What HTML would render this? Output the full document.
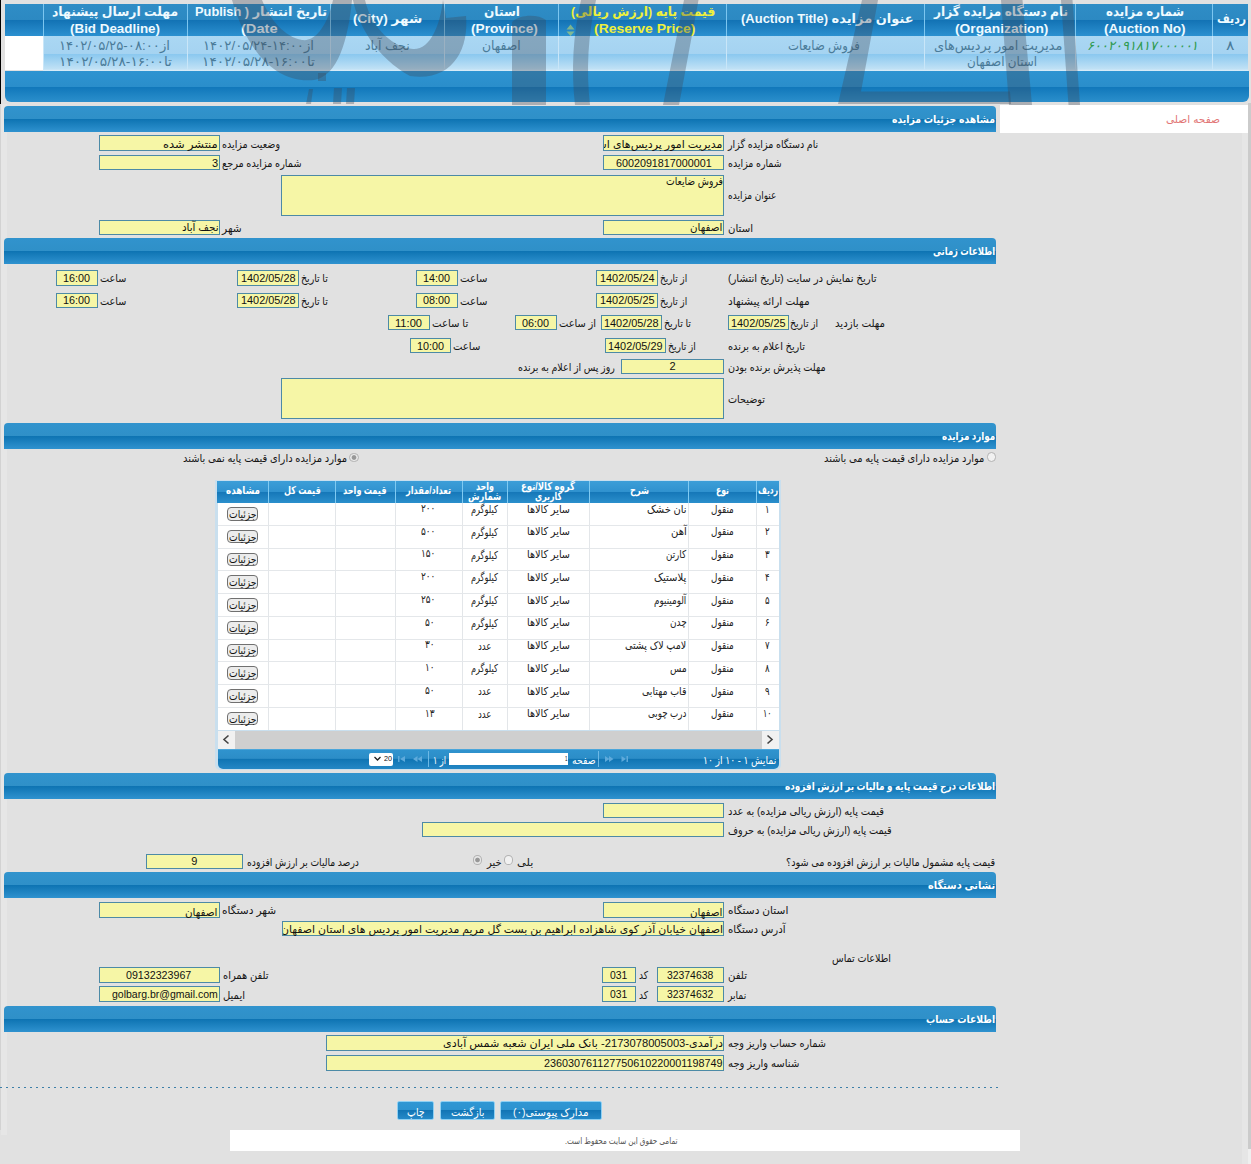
<!DOCTYPE html><html lang="fa"><head><meta charset="utf-8"><title>مشاهده جزئیات مزایده</title><style>
html,body{margin:0;padding:0}
body{background:#e1e1e1}
#pg{position:relative;width:1251px;height:1164px;overflow:hidden;background:#e1e1e1;font-family:"Liberation Sans","DejaVu Sans",sans-serif;font-size:11px;color:#111;direction:rtl}
#pg div{position:absolute;box-sizing:border-box}
.t{position:absolute;white-space:nowrap;transform-origin:0 0;line-height:14px;direction:rtl}
.sh{background:linear-gradient(to bottom,#3193cd 0,#2f90c8 50%,#0d73b2 50%,#2f92cf 100%);border-radius:4px 4px 0 0}
.ht{color:#fff;font-weight:bold;font-size:11px}
.in{background:#f6f6a6;border:1px solid #4c8aa6}
.l{color:#151515}
.iv{color:#111}
.th{color:#eefaff;font-weight:bold;font-size:13px;line-height:16px}
.ty{color:#eef03c}
.td{color:#4a7b99;font-size:13px;line-height:16px}
.gr{color:#2f9a4f;font-style:italic}
.g{color:#222;font-size:11px}
.gh{color:#fff;font-weight:bold;font-size:11px;line-height:12px}
.gb{color:#111;font-size:11px;line-height:12px}
.sm{color:#555;font-size:9px;line-height:12px}
.bt{color:#fff;font-size:11px}
.pg{color:#fff;font-size:11px}
.pk{color:#e27676}
.rd{border:1px solid #b2b2b2;border-radius:50%;background:#f1f1f1}
.rs{background:radial-gradient(circle,#959595 0,#9a9a9a 36%,#e6e6e6 52%,#eee 100%)}
.gbtn{background:#ececec;border:1px solid #707070;border-radius:4px}
.btn{border:1px solid #8fd0f3;border-radius:2px;background:linear-gradient(to bottom,#3097d4 0,#2c92cf 50%,#1275b5 50%,#2589c8 100%)}
.sel{color:#111;font-size:8px}

</style></head><body><div id="pg">
<div class="" style="left:1248px;top:103px;width:3px;height:1046px;background:#cbcbcb"></div>
<div class="" style="left:1248px;top:1149px;width:3px;height:15px;background:#efefef"></div>
<div class="" style="left:1242px;top:133px;width:6px;height:1031px;background:#e6e6e6"></div>
<div class="" style="left:0px;top:104px;width:1px;height:1026px;background:#d2d2d2"></div>
<div class="" style="left:1px;top:104px;width:5.5px;height:1031px;background:#e6e6e6"></div>
<div class="" style="left:0px;top:0px;width:1px;height:104px;background:#000"></div>
<div class="" style="left:5px;top:4px;width:1243px;height:32px;background:linear-gradient(to bottom,#2f8dc6 0,#2c89c2 50%,#1272b4 50%,#2b90d0 100%)"></div>
<div class="" style="left:42.5px;top:4px;width:1.0px;height:32px;background:#7cc6f0"></div>
<div class="" style="left:186.5px;top:4px;width:1.0px;height:32px;background:#7cc6f0"></div>
<div class="" style="left:329.5px;top:4px;width:1.0px;height:32px;background:#7cc6f0"></div>
<div class="" style="left:443.5px;top:4px;width:1.0px;height:32px;background:#7cc6f0"></div>
<div class="" style="left:557.5px;top:4px;width:1.0px;height:32px;background:#7cc6f0"></div>
<div class="" style="left:725.5px;top:4px;width:1.0px;height:32px;background:#7cc6f0"></div>
<div class="" style="left:924.0px;top:4px;width:1.0px;height:32px;background:#7cc6f0"></div>
<div class="" style="left:1074.5px;top:4px;width:1.0px;height:32px;background:#7cc6f0"></div>
<div class="" style="left:1211.5px;top:4px;width:1.0px;height:32px;background:#7cc6f0"></div>
<div class="" style="left:5px;top:36px;width:38px;height:34px;background:#fff"></div>
<div class="" style="left:43px;top:36px;width:1205px;height:35px;background:linear-gradient(to bottom,#aad7f3 0,#a5d3f1 52%,#8ac8ef 52%,#c0e1f5 94%,#dcedf8 100%)"></div>
<div class="" style="left:42.5px;top:36px;width:1.0px;height:34px;background:#c9e6f8"></div>
<div class="" style="left:186.5px;top:36px;width:1.0px;height:34px;background:#c9e6f8"></div>
<div class="" style="left:329.5px;top:36px;width:1.0px;height:34px;background:#c9e6f8"></div>
<div class="" style="left:443.5px;top:36px;width:1.0px;height:34px;background:#c9e6f8"></div>
<div class="" style="left:557.5px;top:36px;width:1.0px;height:34px;background:#c9e6f8"></div>
<div class="" style="left:725.5px;top:36px;width:1.0px;height:34px;background:#c9e6f8"></div>
<div class="" style="left:924.0px;top:36px;width:1.0px;height:34px;background:#c9e6f8"></div>
<div class="" style="left:1074.5px;top:36px;width:1.0px;height:34px;background:#c9e6f8"></div>
<div class="" style="left:1211.5px;top:36px;width:1.0px;height:34px;background:#c9e6f8"></div>
<div class="" style="left:5px;top:71px;width:1244px;height:31px;background:linear-gradient(to bottom,#2d93d1 0,#2a8ecb 51%,#1077ba 51%,#2b8fcc 100%);border-radius:0 0 6px 6px"></div>
<div class="" style="left:1000px;top:105px;width:248px;height:28px;background:#fff"></div>
<div class="sh" style="left:4px;top:106px;width:992px;height:26px;"></div>
<div class="in" style="left:603px;top:135px;width:121px;height:16px;"></div>
<div class="in" style="left:603px;top:155px;width:121px;height:15px;"></div>
<div class="in" style="left:281.3px;top:174.7px;width:442.7px;height:41.8px;"></div>
<div class="in" style="left:603px;top:220.2px;width:121px;height:15.0px;"></div>
<div class="in" style="left:99px;top:135px;width:120.5px;height:16px;"></div>
<div class="in" style="left:99px;top:155px;width:120.5px;height:15px;"></div>
<div class="in" style="left:99px;top:220.2px;width:120.5px;height:15.0px;"></div>
<div class="sh" style="left:4px;top:238px;width:992px;height:26px;"></div>
<div class="in" style="left:596px;top:269.5px;width:61.5px;height:16.0px;"></div>
<div class="in" style="left:415.5px;top:269.5px;width:42.0px;height:16.0px;"></div>
<div class="in" style="left:237px;top:269.5px;width:61.7px;height:16.0px;"></div>
<div class="in" style="left:55.5px;top:269.5px;width:42.0px;height:16.0px;"></div>
<div class="in" style="left:596px;top:292.5px;width:61.5px;height:15.2px;"></div>
<div class="in" style="left:415.5px;top:292.5px;width:42.0px;height:15.2px;"></div>
<div class="in" style="left:237px;top:292.5px;width:61.7px;height:15.2px;"></div>
<div class="in" style="left:55.5px;top:292.5px;width:42.0px;height:15.2px;"></div>
<div class="in" style="left:728px;top:314.7px;width:61px;height:15.6px;"></div>
<div class="in" style="left:600.5px;top:314.7px;width:61.5px;height:15.6px;"></div>
<div class="in" style="left:514.5px;top:314.7px;width:42.0px;height:15.6px;"></div>
<div class="in" style="left:388px;top:314.7px;width:41.5px;height:15.6px;"></div>
<div class="in" style="left:604.5px;top:337.5px;width:61.0px;height:15.5px;"></div>
<div class="in" style="left:409.6px;top:337.5px;width:41.4px;height:15.5px;"></div>
<div class="in" style="left:621px;top:358.5px;width:103px;height:15.0px;"></div>
<div class="in" style="left:281.3px;top:377.5px;width:442.7px;height:41.5px;"></div>
<div class="sh" style="left:4px;top:423px;width:992px;height:26px;"></div>
<div class="rd" style="left:986.5px;top:452.3px;width:9.3px;height:9.3px;"></div>
<div class="rd rs" style="left:349.3px;top:452.5px;width:9.3px;height:9.3px;"></div>
<div class="" style="left:215.2px;top:480px;width:565.8px;height:290px;background:#c9dfee;border-radius:0 0 5px 5px"></div>
<div class="" style="left:217px;top:480.5px;width:562.3px;height:22.0px;background:linear-gradient(to bottom,#3c9ed8 0,#3092cf 48%,#1577b8 50%,#2b8fcc 100%)"></div>
<div class="" style="left:268.0px;top:480.5px;width:1.0px;height:22.0px;background:#7fcaf2"></div>
<div class="" style="left:334.5px;top:480.5px;width:1.0px;height:22.0px;background:#7fcaf2"></div>
<div class="" style="left:394.5px;top:480.5px;width:1.0px;height:22.0px;background:#7fcaf2"></div>
<div class="" style="left:461.8px;top:480.5px;width:1.0px;height:22.0px;background:#7fcaf2"></div>
<div class="" style="left:506.5px;top:480.5px;width:1.0px;height:22.0px;background:#7fcaf2"></div>
<div class="" style="left:589.0px;top:480.5px;width:1.0px;height:22.0px;background:#7fcaf2"></div>
<div class="" style="left:688.1px;top:480.5px;width:1.0px;height:22.0px;background:#7fcaf2"></div>
<div class="" style="left:755.7px;top:480.5px;width:1.0px;height:22.0px;background:#7fcaf2"></div>
<div class="" style="left:218px;top:502.5px;width:561.3px;height:227.5px;background:#fff"></div>
<div class="" style="left:268.0px;top:502.5px;width:1.0px;height:227.5px;background:#e3e6e9"></div>
<div class="" style="left:334.5px;top:502.5px;width:1.0px;height:227.5px;background:#e3e6e9"></div>
<div class="" style="left:394.5px;top:502.5px;width:1.0px;height:227.5px;background:#e3e6e9"></div>
<div class="" style="left:461.8px;top:502.5px;width:1.0px;height:227.5px;background:#e3e6e9"></div>
<div class="" style="left:506.5px;top:502.5px;width:1.0px;height:227.5px;background:#e3e6e9"></div>
<div class="" style="left:589.0px;top:502.5px;width:1.0px;height:227.5px;background:#e3e6e9"></div>
<div class="" style="left:688.1px;top:502.5px;width:1.0px;height:227.5px;background:#e3e6e9"></div>
<div class="" style="left:755.7px;top:502.5px;width:1.0px;height:227.5px;background:#e3e6e9"></div>
<div class="" style="left:218px;top:524.75px;width:561.3px;height:1.0px;background:#e4e7ea"></div>
<div class="" style="left:218px;top:547.5px;width:561.3px;height:1.0px;background:#e4e7ea"></div>
<div class="" style="left:218px;top:570.25px;width:561.3px;height:1.0px;background:#e4e7ea"></div>
<div class="" style="left:218px;top:593.0px;width:561.3px;height:1.0px;background:#e4e7ea"></div>
<div class="" style="left:218px;top:615.75px;width:561.3px;height:1.0px;background:#e4e7ea"></div>
<div class="" style="left:218px;top:638.5px;width:561.3px;height:1.0px;background:#e4e7ea"></div>
<div class="" style="left:218px;top:661.25px;width:561.3px;height:1.0px;background:#e4e7ea"></div>
<div class="" style="left:218px;top:684.0px;width:561.3px;height:1.0px;background:#e4e7ea"></div>
<div class="" style="left:218px;top:706.75px;width:561.3px;height:1.0px;background:#e4e7ea"></div>
<div class="gbtn" style="left:227.3px;top:507.2px;width:31.0px;height:13.5px;"></div>
<div class="gbtn" style="left:227.3px;top:529.95px;width:31.0px;height:13.5px;"></div>
<div class="gbtn" style="left:227.3px;top:552.7px;width:31.0px;height:13.5px;"></div>
<div class="gbtn" style="left:227.3px;top:575.45px;width:31.0px;height:13.5px;"></div>
<div class="gbtn" style="left:227.3px;top:598.2px;width:31.0px;height:13.5px;"></div>
<div class="gbtn" style="left:227.3px;top:620.95px;width:31.0px;height:13.5px;"></div>
<div class="gbtn" style="left:227.3px;top:643.7px;width:31.0px;height:13.5px;"></div>
<div class="gbtn" style="left:227.3px;top:666.45px;width:31.0px;height:13.5px;"></div>
<div class="gbtn" style="left:227.3px;top:689.2px;width:31.0px;height:13.5px;"></div>
<div class="gbtn" style="left:227.3px;top:711.95px;width:31.0px;height:13.5px;"></div>
<div class="" style="left:218px;top:730.5px;width:561.3px;height:18.0px;background:#cfcfcf"></div>
<div class="" style="left:218px;top:730.5px;width:17.4px;height:18.0px;background:#f1f1f1"></div>
<div class="" style="left:762.3px;top:730.5px;width:17.0px;height:18.0px;background:#f1f1f1"></div>
<div class="" style="left:218px;top:748.7px;width:561.3px;height:20.5px;background:linear-gradient(to bottom,#5fb3e3 0,#2f93ce 6%,#2c8dc7 47%,#0f74b3 50%,#2487c5 100%);border-radius:0 0 5px 5px"></div>
<div class="" style="left:448.5px;top:753px;width:119.5px;height:12px;background:#fff"></div>
<div class="" style="left:369px;top:752.5px;width:24px;height:13.0px;background:#fff;border-radius:2px"></div>
<div class="" style="left:427.5px;top:751px;width:1.0px;height:16px;background:#6db9e6"></div>
<div class="" style="left:598px;top:751px;width:1px;height:16px;background:#6db9e6"></div>
<div class="sh" style="left:4px;top:773px;width:992px;height:26px;"></div>
<div class="in" style="left:603px;top:802.5px;width:121px;height:15.5px;"></div>
<div class="in" style="left:421.5px;top:822.4px;width:302.5px;height:14.9px;"></div>
<div class="rd" style="left:503.7px;top:855.4px;width:9.3px;height:9.5px;"></div>
<div class="rd rs" style="left:472.6px;top:855.4px;width:9.4px;height:9.5px;"></div>
<div class="in" style="left:146px;top:854px;width:96.5px;height:14.7px;"></div>
<div class="sh" style="left:4px;top:872px;width:992px;height:26px;"></div>
<div class="in" style="left:603px;top:901.5px;width:121px;height:16.0px;"></div>
<div class="in" style="left:99px;top:901.5px;width:120.5px;height:16.0px;"></div>
<div class="in" style="left:282px;top:921px;width:442px;height:15.3px;"></div>
<div class="in" style="left:656.7px;top:967px;width:66.9px;height:15.6px;"></div>
<div class="in" style="left:602px;top:967px;width:33.5px;height:15.6px;"></div>
<div class="in" style="left:656.7px;top:986.4px;width:66.9px;height:15.6px;"></div>
<div class="in" style="left:602px;top:986.4px;width:33.5px;height:15.6px;"></div>
<div class="in" style="left:99px;top:967px;width:120.5px;height:15.7px;"></div>
<div class="in" style="left:99px;top:986.3px;width:120.5px;height:16.2px;"></div>
<div class="sh" style="left:4px;top:1005.5px;width:992px;height:26.0px;"></div>
<div class="in" style="left:326px;top:1034.7px;width:398px;height:16.0px;"></div>
<div class="in" style="left:326px;top:1054.9px;width:398px;height:15.7px;"></div>
<div class="" style="left:0px;top:1086.8px;width:999px;height:1.3px;background:repeating-linear-gradient(to right,#3d7fa8 0,#3d7fa8 2px,transparent 2px,transparent 6px)"></div>
<div class="btn" style="left:397px;top:1101px;width:37.3px;height:19.4px;"></div>
<div class="btn" style="left:439.7px;top:1101px;width:55.3px;height:19.4px;"></div>
<div class="btn" style="left:500px;top:1101px;width:101.6px;height:19.4px;"></div>
<div class="" style="left:230px;top:1130px;width:789.5px;height:21px;background:#fff"></div>
<span class="t th" style="left:52.0px;top:3.7px;transform:scaleX(0.950)">مهلت ارسال پیشنهاد</span>
<span class="t th" style="left:70.0px;top:20.5px;transform:scaleX(1.029)">(Bid Deadline)</span>
<span class="t th" style="left:194.5px;top:3.7px;transform:scaleX(0.986)">تاریخ انتشار ( Publish</span>
<span class="t th" style="left:240.5px;top:20.5px;transform:scaleX(1.122)">Date)</span>
<span class="t th" style="left:353.0px;top:11.4px;transform:scaleX(1.045)">شهر (City)</span>
<span class="t th" style="left:483.8px;top:3.7px;transform:scaleX(0.934)">استان</span>
<span class="t th" style="left:471.0px;top:20.5px;transform:scaleX(1.050)">(Province)</span>
<span class="t th ty" style="left:570.6px;top:3.7px;transform:scaleX(0.956)">قیمت پایه (ارزش ریالی)</span>
<span class="t th ty" style="left:594.0px;top:20.5px;transform:scaleX(1.071)">(Reserve Price)</span>
<span class="t th" style="left:741.4px;top:11.4px;transform:scaleX(0.998)">عنوان مزایده (Auction Title)</span>
<span class="t th" style="left:933.7px;top:3.7px;transform:scaleX(0.936)">نام دستگاه مزایده گزار</span>
<span class="t th" style="left:955.3px;top:20.5px;transform:scaleX(1.060)">(Organization)</span>
<span class="t th" style="left:1106.0px;top:3.7px;transform:scaleX(0.909)">شماره مزایده</span>
<span class="t th" style="left:1104.0px;top:20.5px;transform:scaleX(1.046)">(Auction No)</span>
<span class="t th" style="left:1216.5px;top:11.4px;transform:scaleX(0.846)">ردیف</span>
<span class="t td" style="left:59.0px;top:38.0px;transform:scaleX(1.020)">از<span dir=ltr>۱۴۰۲/۰۵/۲۵-۰۸:۰۰</span></span>
<span class="t td" style="left:59.0px;top:53.5px;transform:scaleX(1.060)">تا<span dir=ltr>۱۴۰۲/۰۵/۲۸-۱۶:۰۰</span></span>
<span class="t td" style="left:203.0px;top:38.0px;transform:scaleX(1.020)">از<span dir=ltr>۱۴۰۲/۰۵/۲۴-۱۴:۰۰</span></span>
<span class="t td" style="left:202.0px;top:53.5px;transform:scaleX(1.060)">تا<span dir=ltr>۱۴۰۲/۰۵/۲۸-۱۶:۰۰</span></span>
<span class="t td" style="left:365.0px;top:38.0px;transform:scaleX(0.970)">نجف آباد</span>
<span class="t td" style="left:481.7px;top:38.0px;transform:scaleX(0.953)">اصفهان</span>
<span class="t td" style="left:788.2px;top:38.0px;transform:scaleX(0.895)">فروش ضایعات</span>
<span class="t td" style="left:934.2px;top:38.0px;transform:scaleX(0.992)">مدیریت امور پردیس‌های</span>
<span class="t td" style="left:967.3px;top:53.5px;transform:scaleX(0.920)">استان اصفهان</span>
<span class="t td gr" style="left:1086.6px;top:38.0px;transform:scaleX(0.995)">۶۰۰۲۰۹۱۸۱۷۰۰۰۰۰۱</span>
<span class="t td" style="left:1225.5px;top:38.0px;transform:scaleX(1.217)">۸</span>
<span class="t l pk" style="left:1166.0px;top:112.3px;transform:scaleX(0.961)">صفحه اصلی</span>
<span class="t ht" style="left:892.0px;top:112.2px;transform:scaleX(0.846)">مشاهده جزئیات مزایده</span>
<span class="t l" style="left:728.3px;top:136.6px;transform:scaleX(0.865)">نام دستگاه مزایده گزار</span>
<span class="t l" style="left:728.3px;top:156.1px;transform:scaleX(0.857)">شماره مزایده</span>
<span class="t l" style="left:728.3px;top:188.4px;transform:scaleX(0.815)">عنوان مزایده</span>
<span class="t l" style="left:728.3px;top:220.5px;transform:scaleX(0.925)">استان</span>
<span class="t l" style="left:222.0px;top:136.6px;transform:scaleX(0.869)">وضعیت مزایده</span>
<span class="t l" style="left:222.0px;top:156.1px;transform:scaleX(0.880)">شماره مزایده مرجع</span>
<span class="t l" style="left:222.4px;top:220.5px;transform:scaleX(0.968)">شهر</span>
<div style="left:604px;top:136.5px;width:119px;height:14px;overflow:hidden"><span class="t iv" style="left:-58.7px;top:0;transform:scaleX(1.000)">مدیریت امور پردیس‌های استان اصفهان</span></div>
<span class="t iv" style="left:615.6px;top:156.0px;transform:scaleX(0.977)">6002091817000001</span>
<span class="t iv" style="left:665.8px;top:174.0px;transform:scaleX(0.838)">فروش ضایعات</span>
<span class="t iv" style="left:689.8px;top:220.2px;transform:scaleX(0.937)">اصفهان</span>
<span class="t iv" style="left:163.4px;top:136.5px;transform:scaleX(1.049)">منتشر شده</span>
<span class="t iv" style="left:211.9px;top:156.0px;transform:scaleX(1.000)">3</span>
<span class="t iv" style="left:182.2px;top:220.2px;transform:scaleX(0.939)">نجف آباد</span>
<span class="t ht" style="left:933.0px;top:244.2px;transform:scaleX(0.768)">اطلاعات زمانی</span>
<span class="t l" style="left:728.0px;top:271.1px;transform:scaleX(0.924)">تاریخ نمایش در سایت (تاریخ انتشار)</span>
<span class="t iv" style="left:599.5px;top:270.8px;transform:scaleX(0.990)">1402/05/24</span>
<span class="t l" style="left:659.5px;top:271.1px;transform:scaleX(0.814)">از تاریخ</span>
<span class="t iv" style="left:423.0px;top:270.8px;transform:scaleX(0.981)">14:00</span>
<span class="t l" style="left:459.6px;top:271.1px;transform:scaleX(0.915)">ساعت</span>
<span class="t iv" style="left:240.6px;top:270.8px;transform:scaleX(0.990)">1402/05/28</span>
<span class="t l" style="left:301.0px;top:271.1px;transform:scaleX(0.855)">تا تاریخ</span>
<span class="t iv" style="left:63.0px;top:270.8px;transform:scaleX(0.981)">16:00</span>
<span class="t l" style="left:100.0px;top:271.1px;transform:scaleX(0.878)">ساعت</span>
<span class="t l" style="left:728.0px;top:294.0px;transform:scaleX(0.964)">مهلت ارائه پیشنهاد</span>
<span class="t iv" style="left:599.5px;top:293.4px;transform:scaleX(0.990)">1402/05/25</span>
<span class="t l" style="left:659.5px;top:294.0px;transform:scaleX(0.814)">از تاریخ</span>
<span class="t iv" style="left:423.0px;top:293.4px;transform:scaleX(0.981)">08:00</span>
<span class="t l" style="left:459.6px;top:294.0px;transform:scaleX(0.915)">ساعت</span>
<span class="t iv" style="left:240.6px;top:293.4px;transform:scaleX(0.990)">1402/05/28</span>
<span class="t l" style="left:301.0px;top:294.0px;transform:scaleX(0.855)">تا تاریخ</span>
<span class="t iv" style="left:63.0px;top:293.4px;transform:scaleX(0.981)">16:00</span>
<span class="t l" style="left:100.0px;top:294.0px;transform:scaleX(0.878)">ساعت</span>
<span class="t l" style="left:835.4px;top:316.1px;transform:scaleX(0.927)">مهلت بازدید</span>
<span class="t iv" style="left:731.2px;top:315.8px;transform:scaleX(0.990)">1402/05/25</span>
<span class="t l" style="left:790.4px;top:316.1px;transform:scaleX(0.844)">از تاریخ</span>
<span class="t iv" style="left:604.0px;top:315.8px;transform:scaleX(0.990)">1402/05/28</span>
<span class="t l" style="left:663.8px;top:316.1px;transform:scaleX(0.861)">تا تاریخ</span>
<span class="t iv" style="left:522.0px;top:315.8px;transform:scaleX(0.981)">06:00</span>
<span class="t l" style="left:559.4px;top:316.1px;transform:scaleX(0.895)">از ساعت</span>
<span class="t iv" style="left:395.2px;top:315.8px;transform:scaleX(1.011)">11:00</span>
<span class="t l" style="left:431.8px;top:316.1px;transform:scaleX(0.919)">تا ساعت</span>
<span class="t l" style="left:728.0px;top:338.9px;transform:scaleX(0.888)">تاریخ اعلام به برنده</span>
<span class="t iv" style="left:607.8px;top:338.6px;transform:scaleX(0.990)">1402/05/29</span>
<span class="t l" style="left:667.6px;top:338.9px;transform:scaleX(0.835)">از تاریخ</span>
<span class="t iv" style="left:416.8px;top:338.6px;transform:scaleX(0.981)">10:00</span>
<span class="t l" style="left:453.0px;top:338.9px;transform:scaleX(0.912)">ساعت</span>
<span class="t l" style="left:728.0px;top:359.6px;transform:scaleX(0.876)">مهلت پذیرش برنده بودن</span>
<span class="t iv" style="left:669.4px;top:359.3px;transform:scaleX(1.000)">2</span>
<span class="t l" style="left:518.2px;top:359.6px;transform:scaleX(0.862)">روز پس از اعلام به برنده</span>
<span class="t l" style="left:728.0px;top:391.6px;transform:scaleX(0.876)">توضیحات</span>
<span class="t ht" style="left:941.8px;top:429.2px;transform:scaleX(0.795)">موارد مزایده</span>
<span class="t l" style="left:823.6px;top:451.3px;transform:scaleX(0.898)">موارد مزایده دارای قیمت پایه می باشند</span>
<span class="t l" style="left:183.2px;top:451.3px;transform:scaleX(0.901)">موارد مزایده دارای قیمت پایه نمی باشند</span>
<span class="t gh" style="left:226.0px;top:483.9px;transform:scaleX(0.798)">مشاهده</span>
<span class="t gh" style="left:284.3px;top:483.9px;transform:scaleX(0.734)">قیمت کل</span>
<span class="t gh" style="left:343.2px;top:483.9px;transform:scaleX(0.741)">قیمت واحد</span>
<span class="t gh" style="left:406.1px;top:483.9px;transform:scaleX(0.746)">تعداد/مقدار</span>
<span class="t gh" style="left:475.6px;top:479.6px;transform:scaleX(0.723)">واحد</span>
<span class="t gh" style="left:468.0px;top:490.2px;transform:scaleX(0.760)">شمارش</span>
<span class="t gh" style="left:521.2px;top:479.6px;transform:scaleX(0.772)">گروه کالا/نوع</span>
<span class="t gh" style="left:534.8px;top:490.2px;transform:scaleX(0.712)">کاربری</span>
<span class="t gh" style="left:629.5px;top:483.9px;transform:scaleX(0.742)">شرح</span>
<span class="t gh" style="left:715.9px;top:483.9px;transform:scaleX(0.701)">نوع</span>
<span class="t gh" style="left:757.8px;top:483.9px;transform:scaleX(0.684)">ردیف</span>
<span class="t g" style="left:765.3px;top:501.5px;transform:scaleX(0.777)">۱</span>
<span class="t g" style="left:710.8px;top:501.5px;transform:scaleX(0.801)">منقول</span>
<span class="t g" style="left:646.9px;top:501.5px;transform:scaleX(0.900)">نان خشک</span>
<span class="t g" style="left:526.5px;top:501.5px;transform:scaleX(0.881)">سایر کالاها</span>
<span class="t g" style="left:471.1px;top:502.0px;transform:scaleX(0.744)">کیلوگرم</span>
<span class="t g" style="left:421.0px;top:500.8px;transform:scaleX(0.812)">۲۰۰</span>
<span class="t gb" style="left:229.1px;top:507.8px;transform:scaleX(0.834)">جزئیات</span>
<span class="t g" style="left:765.3px;top:524.2px;transform:scaleX(0.777)">۲</span>
<span class="t g" style="left:710.8px;top:524.2px;transform:scaleX(0.801)">منقول</span>
<span class="t g" style="left:670.8px;top:524.2px;transform:scaleX(0.911)">آهن</span>
<span class="t g" style="left:526.5px;top:524.2px;transform:scaleX(0.881)">سایر کالاها</span>
<span class="t g" style="left:471.1px;top:524.8px;transform:scaleX(0.744)">کیلوگرم</span>
<span class="t g" style="left:421.0px;top:523.5px;transform:scaleX(0.812)">۵۰۰</span>
<span class="t gb" style="left:229.1px;top:530.6px;transform:scaleX(0.834)">جزئیات</span>
<span class="t g" style="left:765.3px;top:547.0px;transform:scaleX(0.777)">۳</span>
<span class="t g" style="left:710.8px;top:547.0px;transform:scaleX(0.801)">منقول</span>
<span class="t g" style="left:666.3px;top:547.0px;transform:scaleX(0.797)">کارتن</span>
<span class="t g" style="left:526.5px;top:547.0px;transform:scaleX(0.881)">سایر کالاها</span>
<span class="t g" style="left:471.1px;top:547.5px;transform:scaleX(0.744)">کیلوگرم</span>
<span class="t g" style="left:421.0px;top:546.3px;transform:scaleX(0.812)">۱۵۰</span>
<span class="t gb" style="left:229.1px;top:553.3px;transform:scaleX(0.834)">جزئیات</span>
<span class="t g" style="left:765.3px;top:569.8px;transform:scaleX(0.777)">۴</span>
<span class="t g" style="left:710.8px;top:569.8px;transform:scaleX(0.801)">منقول</span>
<span class="t g" style="left:654.2px;top:569.8px;transform:scaleX(0.914)">پلاستیک</span>
<span class="t g" style="left:526.5px;top:569.8px;transform:scaleX(0.881)">سایر کالاها</span>
<span class="t g" style="left:471.1px;top:570.2px;transform:scaleX(0.744)">کیلوگرم</span>
<span class="t g" style="left:421.0px;top:569.0px;transform:scaleX(0.812)">۲۰۰</span>
<span class="t gb" style="left:229.1px;top:576.1px;transform:scaleX(0.834)">جزئیات</span>
<span class="t g" style="left:765.3px;top:592.5px;transform:scaleX(0.777)">۵</span>
<span class="t g" style="left:710.8px;top:592.5px;transform:scaleX(0.801)">منقول</span>
<span class="t g" style="left:654.2px;top:592.5px;transform:scaleX(0.799)">آلومینیوم</span>
<span class="t g" style="left:526.5px;top:592.5px;transform:scaleX(0.881)">سایر کالاها</span>
<span class="t g" style="left:471.1px;top:593.0px;transform:scaleX(0.744)">کیلوگرم</span>
<span class="t g" style="left:421.0px;top:591.8px;transform:scaleX(0.812)">۲۵۰</span>
<span class="t gb" style="left:229.1px;top:598.8px;transform:scaleX(0.834)">جزئیات</span>
<span class="t g" style="left:765.3px;top:615.2px;transform:scaleX(0.777)">۶</span>
<span class="t g" style="left:710.8px;top:615.2px;transform:scaleX(0.801)">منقول</span>
<span class="t g" style="left:669.7px;top:615.2px;transform:scaleX(0.813)">چدن</span>
<span class="t g" style="left:526.5px;top:615.2px;transform:scaleX(0.881)">سایر کالاها</span>
<span class="t g" style="left:471.1px;top:615.8px;transform:scaleX(0.744)">کیلوگرم</span>
<span class="t g" style="left:424.5px;top:614.5px;transform:scaleX(0.812)">۵۰</span>
<span class="t gb" style="left:229.1px;top:621.6px;transform:scaleX(0.834)">جزئیات</span>
<span class="t g" style="left:765.3px;top:638.0px;transform:scaleX(0.777)">۷</span>
<span class="t g" style="left:710.8px;top:638.0px;transform:scaleX(0.801)">منقول</span>
<span class="t g" style="left:625.3px;top:638.0px;transform:scaleX(0.867)">لامپ لاک پشتی</span>
<span class="t g" style="left:526.5px;top:638.0px;transform:scaleX(0.881)">سایر کالاها</span>
<span class="t g" style="left:477.8px;top:638.5px;transform:scaleX(0.783)">عدد</span>
<span class="t g" style="left:424.5px;top:637.3px;transform:scaleX(0.812)">۳۰</span>
<span class="t gb" style="left:229.1px;top:644.3px;transform:scaleX(0.834)">جزئیات</span>
<span class="t g" style="left:765.3px;top:660.8px;transform:scaleX(0.777)">۸</span>
<span class="t g" style="left:710.8px;top:660.8px;transform:scaleX(0.801)">منقول</span>
<span class="t g" style="left:669.7px;top:660.8px;transform:scaleX(0.843)">مس</span>
<span class="t g" style="left:526.5px;top:660.8px;transform:scaleX(0.881)">سایر کالاها</span>
<span class="t g" style="left:471.1px;top:661.2px;transform:scaleX(0.744)">کیلوگرم</span>
<span class="t g" style="left:424.5px;top:660.0px;transform:scaleX(0.812)">۱۰</span>
<span class="t gb" style="left:229.1px;top:667.1px;transform:scaleX(0.834)">جزئیات</span>
<span class="t g" style="left:765.3px;top:683.5px;transform:scaleX(0.777)">۹</span>
<span class="t g" style="left:710.8px;top:683.5px;transform:scaleX(0.801)">منقول</span>
<span class="t g" style="left:642.1px;top:683.5px;transform:scaleX(0.856)">قاب مهتابی</span>
<span class="t g" style="left:526.5px;top:683.5px;transform:scaleX(0.881)">سایر کالاها</span>
<span class="t g" style="left:477.8px;top:684.0px;transform:scaleX(0.783)">عدد</span>
<span class="t g" style="left:424.5px;top:682.8px;transform:scaleX(0.812)">۵۰</span>
<span class="t gb" style="left:229.1px;top:689.8px;transform:scaleX(0.834)">جزئیات</span>
<span class="t g" style="left:763.3px;top:706.2px;transform:scaleX(0.727)">۱۰</span>
<span class="t g" style="left:710.8px;top:706.2px;transform:scaleX(0.801)">منقول</span>
<span class="t g" style="left:648.2px;top:706.2px;transform:scaleX(0.792)">درب چوبی</span>
<span class="t g" style="left:526.5px;top:706.2px;transform:scaleX(0.881)">سایر کالاها</span>
<span class="t g" style="left:477.8px;top:706.8px;transform:scaleX(0.783)">عدد</span>
<span class="t g" style="left:424.5px;top:705.5px;transform:scaleX(0.812)">۱۳</span>
<span class="t gb" style="left:229.1px;top:712.6px;transform:scaleX(0.834)">جزئیات</span>
<span class="t pg" style="left:703.4px;top:752.5px;transform:scaleX(0.844)">نمایش ۱ - ۱۰ از ۱۰</span>
<span class="t pg" style="left:571.5px;top:752.5px;transform:scaleX(0.842)">صفحه</span>
<span class="t pg sel" style="left:564.5px;top:752.3px;transform:scaleX(0.561)">1</span>
<span class="t pg" style="left:433.0px;top:752.5px;transform:scaleX(0.749)">از ۱</span>
<span class="t pg sel" style="left:383.5px;top:752.3px;transform:scaleX(0.898)">20</span>
<span class="t ht" style="left:785.0px;top:779.2px;transform:scaleX(0.807)">اطلاعات درج قیمت پایه و مالیات بر ارزش افزوده</span>
<span class="t l" style="left:728.3px;top:804.2px;transform:scaleX(0.896)">قیمت پایه (ارزش ریالی مزایده) به عدد</span>
<span class="t l" style="left:728.3px;top:823.3px;transform:scaleX(0.878)">قیمت پایه (ارزش ریالی مزایده) به حروف</span>
<span class="t l" style="left:786.3px;top:854.6px;transform:scaleX(0.878)">قیمت پایه مشمول مالیات بر ارزش افزوده می شود؟</span>
<span class="t l" style="left:517.2px;top:854.6px;transform:scaleX(1.027)">بلی</span>
<span class="t l" style="left:486.5px;top:854.6px;transform:scaleX(0.895)">خیر</span>
<span class="t iv" style="left:191.2px;top:854.3px;transform:scaleX(1.000)">9</span>
<span class="t l" style="left:246.5px;top:854.6px;transform:scaleX(0.837)">درصد مالیات بر ارزش افزوده</span>
<span class="t ht" style="left:927.8px;top:878.2px;transform:scaleX(0.887)">نشانی دستگاه</span>
<span class="t l" style="left:728.3px;top:903.4px;transform:scaleX(0.962)">استان دستگاه</span>
<span class="t iv" style="left:690.0px;top:904.5px;transform:scaleX(0.943)">اصفهان</span>
<span class="t l" style="left:222.4px;top:903.4px;transform:scaleX(0.965)">شهر دستگاه</span>
<span class="t iv" style="left:185.0px;top:904.5px;transform:scaleX(0.943)">اصفهان</span>
<span class="t l" style="left:728.3px;top:922.4px;transform:scaleX(0.922)">آدرس دستگاه</span>
<div style="left:283px;top:922.3px;width:440px;height:14px;overflow:hidden"><span class="t iv" style="left:-2.5px;top:0;transform:scaleX(0.989)">اصفهان خیابان آذر کوی شاهزاده ابراهیم بن بست گل مریم مدیریت امور پردیس های استان اصفهان</span></div>
<span class="t l" style="left:832.1px;top:951.3px;transform:scaleX(0.869)">اطلاعات تماس</span>
<span class="t l" style="left:728.2px;top:967.8px;transform:scaleX(0.920)">تلفن</span>
<span class="t iv" style="left:667.0px;top:967.8px;transform:scaleX(0.944)">32374638</span>
<span class="t l" style="left:639.0px;top:967.8px;transform:scaleX(0.817)">کد</span>
<span class="t iv" style="left:610.0px;top:967.8px;transform:scaleX(0.942)">031</span>
<span class="t l" style="left:728.2px;top:987.5px;transform:scaleX(0.831)">نمابر</span>
<span class="t iv" style="left:667.0px;top:987.4px;transform:scaleX(0.944)">32374632</span>
<span class="t l" style="left:639.0px;top:987.5px;transform:scaleX(0.817)">کد</span>
<span class="t iv" style="left:610.0px;top:987.4px;transform:scaleX(0.942)">031</span>
<span class="t l" style="left:222.6px;top:967.8px;transform:scaleX(0.897)">تلفن همراه</span>
<span class="t iv" style="left:126.1px;top:967.8px;transform:scaleX(0.970)">09132323967</span>
<span class="t l" style="left:222.6px;top:987.5px;transform:scaleX(0.911)">ایمیل</span>
<span class="t iv" style="left:112.0px;top:987.2px;transform:scaleX(0.954)">golbarg.br@gmail.com</span>
<span class="t ht" style="left:925.8px;top:1011.7px;transform:scaleX(0.838)">اطلاعات حساب</span>
<span class="t l" style="left:728.3px;top:1036.2px;transform:scaleX(0.889)">شماره حساب واریز وجه</span>
<span class="t iv" style="left:442.5px;top:1035.9px;transform:scaleX(1.013)">درآمدی-2173078005003- بانک ملی ایران شعبه شمس آبادی</span>
<span class="t l" style="left:728.3px;top:1055.8px;transform:scaleX(0.915)">شناسه واریز وجه</span>
<span class="t iv" style="left:544.0px;top:1055.5px;transform:scaleX(0.981)">236030761127750610220001198749</span>
<span class="t bt" style="left:406.8px;top:1104.5px;transform:scaleX(0.858)">چاپ</span>
<span class="t bt" style="left:450.7px;top:1104.5px;transform:scaleX(0.889)">بازگشت</span>
<span class="t bt" style="left:513.0px;top:1104.5px;transform:scaleX(0.945)">مدارک پیوستی(۰)</span>
<span class="t sm" style="left:565.4px;top:1135.2px;transform:scaleX(0.804)">تمامی حقوق این سایت محفوظ است.</span>
<svg style="position:absolute;left:0;top:0" width="1251" height="106" viewBox="0 0 1251 106">
<g fill="rgba(60,70,85,0.33)">
<path d="M232,0 C245,45 272,84 314,80 C338,76 348,40 352,0 L333,0 C328,24 316,42 302,40 C285,37 270,20 262,0 Z"/>
<path d="M353,0 C358,25 377,58 410,76 C452,82 469,50 466,16 L446,18 L443,0 C440,26 430,50 413,49 C395,48 372,30 365,0 Z"/>
<rect x="318" y="73" width="8" height="8"/>
<path d="M306,104 L309,89 L313,89 L311,104 Z M333,104 L334,88 L342,88 L341,104 Z M346,104 L347,88 L355,88 L354,104 Z"/>
<path d="M512,105 L512,22 C520,14 538,14 546,20 L546,105 Z"/>
<path d="M581,0 L596,0 C588,35 586,70 590,105 L575,105 C571,70 573,35 581,0 Z"/>
<path d="M684,0 L698.5,0 L679,105 L663,105 Z"/>
<path d="M862,0 L878,0 L861,91.5 L1010,91.5 L1011,104 L838,104 Z"/>
<path d="M1001,0 L1022.5,0 L1032,105 L1009,105 Z"/>
<path d="M1061,0 L1072.5,0 L1080,105 L1068.5,105 Z"/>
</g>
<g fill="rgba(190,215,110,0.6)"><path d="M566.5,29.5 L570.5,24.5 L574.5,29.5 Z M566.5,31.5 L574.5,31.5 L570.5,36 Z"/></g>
</svg>
<svg style="position:absolute;left:217px;top:730px" width="563" height="40" viewBox="0 0 563 40">
<path d="M11.5,5.5 L7,9.5 L11.5,13.5" fill="none" stroke="#444" stroke-width="1.6"/>
<path d="M550.5,5.5 L555,9.5 L550.5,13.5" fill="none" stroke="#444" stroke-width="1.6"/>
<path d="M157.5,27 L160.5,30 L163.5,27" fill="none" stroke="#222" stroke-width="1.3"/>
<g fill="#5eaadb">
<path d="M183,29 L188,26 L188,32 Z M181,26 h1.5 v6 h-1.5 Z M196,29 L200.5,26 L200.5,32 Z M200.5,29 L205,26 L205,32 Z"/>
<path d="M392.5,29 L388,26 L388,32 Z M396.5,29 L392,26 L392,32 Z M409,29 L404.5,26 L404.5,32 Z M409.5,26 h1.5 v6 h-1.5 Z"/>
</g>
</svg>

</div></body></html>
